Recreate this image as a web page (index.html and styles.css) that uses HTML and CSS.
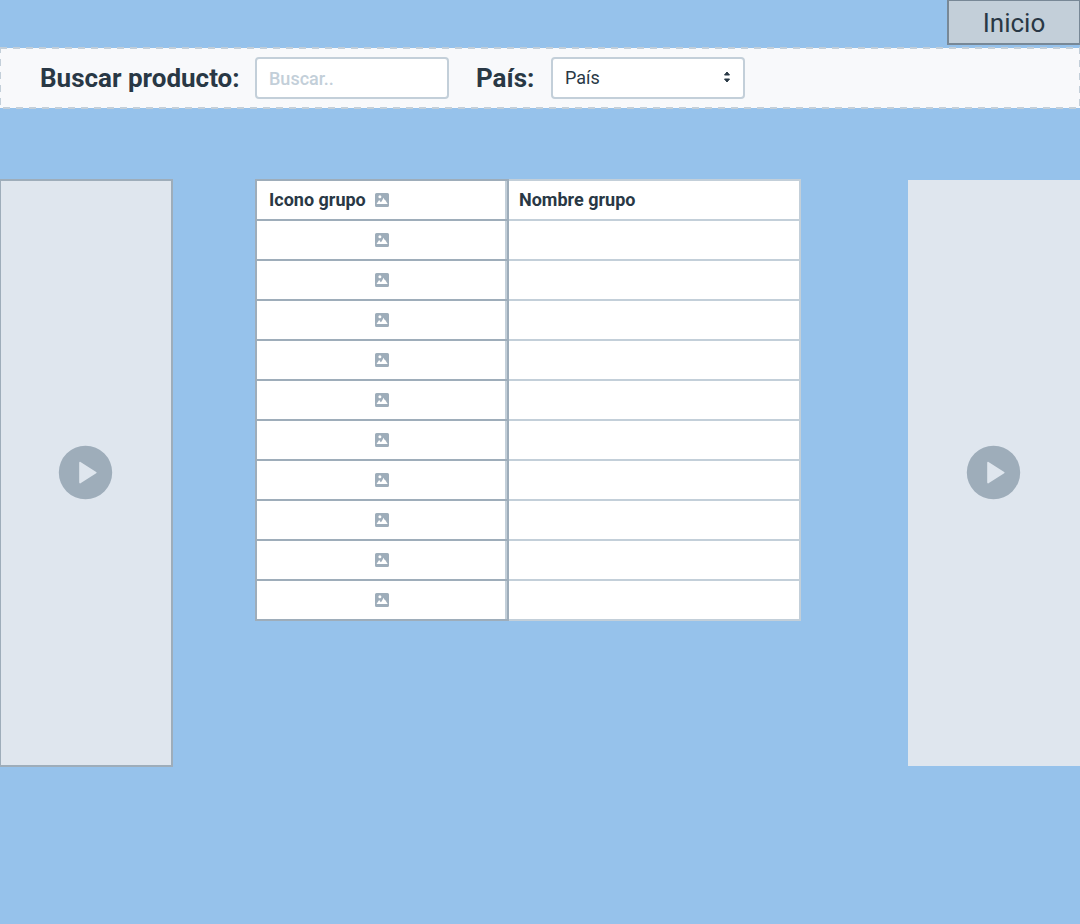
FILE: index.html
```html
<!DOCTYPE html>
<html lang="es">
<head>
<meta charset="utf-8">
<title>Buscar producto</title>
<link rel="stylesheet" href="styles.css">
</head>
<body>
<svg class="sprite" aria-hidden="true">
  <symbol id="picture" viewBox="0 0 14 14">
    <path fill-rule="evenodd" d="M1.500 0h11A1.500 1.500 0 0 1 14 1.500v11a1.500 1.500 0 0 1-1.500 1.500h-11A1.500 1.500 0 0 1 0 12.500v-11A1.500 1.500 0 0 1 1.500 0zM4.900 2.200a1.500 1.500 0 1 0 0 3 1.500 1.500 0 0 0 0-3zM1.500 11h11.200L10.200 7 9.500 6.800 8.600 4.800 6.600 8.400 5.700 9.200 4.200 7 3.100 8.600z"/>
  </symbol>
  <symbol id="play" viewBox="0 0 54 54">
    <path fill-rule="evenodd" d="M26.500-.2a26.700 26.700 0 1 0 0 53.400 26.700 26.700 0 0 0 0-53.400zM20.200 16.700c0-.8.700-1.100 1.300-.7l15.700 10c.5.300.5.900 0 1.200L21.500 37.200c-.6.400-1.300.1-1.300-.6z"/>
  </symbol>
</svg>
<header class="top">
  <button class="home" type="button">Inicio</button>
</header>
<form class="filters">
  <div class="field field-search">
    <label for="search">Buscar producto:</label>
    <input class="control" id="search" type="text" placeholder="Buscar..">
  </div>
  <div class="field field-country">
    <label for="country">País:</label>
    <div class="select-wrap">
      <select class="control" id="country"><option>País</option></select>
      <svg class="arrows" viewBox="0 0 8 12" aria-hidden="true"><path d="M4 1 6.500 4H1.500zM4 11 1.500 8h5z"/></svg>
    </div>
  </div>
</form>
<main class="content">
  <aside class="panel panel-left"><svg class="play" role="img" aria-label="Reproducir"><use href="#play"/></svg></aside>
  <table class="groups">
    <thead>
      <tr>
        <th scope="col"><div class="heading"><span>Icono grupo</span><svg class="picture"><use href="#picture"/></svg></div></th>
        <th scope="col">Nombre grupo</th>
      </tr>
    </thead>
    <tbody>
      <tr><td><svg class="picture"><use href="#picture"/></svg></td><td></td></tr>
      <tr><td><svg class="picture"><use href="#picture"/></svg></td><td></td></tr>
      <tr><td><svg class="picture"><use href="#picture"/></svg></td><td></td></tr>
      <tr><td><svg class="picture"><use href="#picture"/></svg></td><td></td></tr>
      <tr><td><svg class="picture"><use href="#picture"/></svg></td><td></td></tr>
      <tr><td><svg class="picture"><use href="#picture"/></svg></td><td></td></tr>
      <tr><td><svg class="picture"><use href="#picture"/></svg></td><td></td></tr>
      <tr><td><svg class="picture"><use href="#picture"/></svg></td><td></td></tr>
      <tr><td><svg class="picture"><use href="#picture"/></svg></td><td></td></tr>
      <tr><td><svg class="picture"><use href="#picture"/></svg></td><td></td></tr>
    </tbody>
  </table>
  <aside class="panel panel-right"><svg class="play" role="img" aria-label="Reproducir"><use href="#play"/></svg></aside>
</main>
</body>
</html>
```
FILE: styles.css
```css
:root {
  --ink: #293845;
  --line: #c3cfd9;
  --line-dark: #9eadba;
}

* { box-sizing: border-box; }

body {
  margin: 0;
  min-height: 100vh;
  background: #96c2eb;
  color: var(--ink);
  font-family: Roboto, "Liberation Sans", sans-serif;
  font-size: 18px;
}

.sprite { display: none; }

.top {
  display: flex;
  justify-content: flex-end;
  padding-bottom: 2px;
}

.home {
  width: 133px;
  height: 45px;
  padding: 2px 0 0;
  border: solid #788896;
  border-width: 1px 1px 2px 2px;
  background: var(--line);
  color: var(--ink);
  font: 400 26px/32px Roboto, "Liberation Sans", sans-serif;
}

/* Dashed outline straddles the edge of the pale band. */
.filters {
  --dash: var(--line) 0 7px, transparent 7px 13px;
  display: flex;
  gap: 27px;
  padding: 10px 40px;
  background:
    repeating-linear-gradient(to right, var(--dash)) 0 0 / 100% 2px no-repeat,
    repeating-linear-gradient(to right, transparent 0 3px, var(--line) 3px 10px, transparent 10px 13px) 0 100% / 100% 2px no-repeat,
    repeating-linear-gradient(to bottom, var(--line) 0 6px, transparent 6px 12px, var(--line) 12px 13px) 0 0 / 1px 100% no-repeat,
    repeating-linear-gradient(to bottom, var(--dash)) 100% 0 / 1px 100% no-repeat,
    linear-gradient(#f8f9fb, #f8f9fb) 0 1px / 100% calc(100% - 2px) no-repeat;
}

.field {
  display: grid;
  align-items: center;
}

.field-search { grid-template-columns: 215px 194px; }
.field-country { grid-template-columns: 75px 194px; }

.field label {
  font-size: 26px;
  font-weight: 700;
  line-height: 32px;
  white-space: nowrap;
}

.control {
  display: block;
  width: 100%;
  height: 42px;
  padding: 0 12px;
  border: 2px solid var(--line);
  border-radius: 4px;
  background: #fff;
  color: var(--ink);
  font: 400 18px/24px Roboto, "Liberation Sans", sans-serif;
  appearance: none;
}

.control::placeholder { color: var(--line); opacity: 1; font-weight: 500; }

.select-wrap { position: relative; }

.arrows {
  position: absolute;
  top: 14px;
  right: 14px;
  width: 8px;
  height: 12px;
  fill: var(--ink);
  stroke: var(--ink);
  stroke-linejoin: round;
  pointer-events: none;
}

.content {
  display: grid;
  grid-template-columns: 173px 82fr 546px 107fr 172px;
  align-items: start;
  padding-top: 70px;
}

.panel {
  display: grid;
  place-items: center;
  background: #dfe6ee;
}

.panel-left {
  grid-column: 1;
  height: 588px;
  border: 2px solid var(--line-dark);
  border-left-width: 1px;
}

.panel-right {
  grid-column: 5;
  height: 586px;
  margin-top: 1px;
}

.play {
  width: 54px;
  height: 54px;
  overflow: visible;
  fill: var(--line-dark);
}

#play { overflow: visible; }

.groups {
  grid-column: 3;
  width: 100%;
  border-spacing: 0;
  table-layout: fixed;
}

.groups th,
.groups td {
  height: 40px;
  padding: 0 10px;
  border: solid var(--line);
  border-width: 0 2px 2px 0;
  background: #fff;
  line-height: 24px;
  text-align: left;
}

.groups th { height: 42px; border-top-width: 2px; }

.groups th:first-child,
.groups td:first-child {
  width: 254px;
  padding: 0 12px;
  border-left-width: 2px;
  border-color: var(--line-dark);
  box-shadow: inset -2px 0 var(--line);
  text-align: center;
}

.heading {
  display: grid;
  grid-template-columns: 1fr auto 1fr;
  align-items: center;
  text-align: left;
}

.picture {
  display: block;
  width: 14px;
  height: 14px;
  margin: 0 auto;
  fill: var(--line-dark);
}
```
